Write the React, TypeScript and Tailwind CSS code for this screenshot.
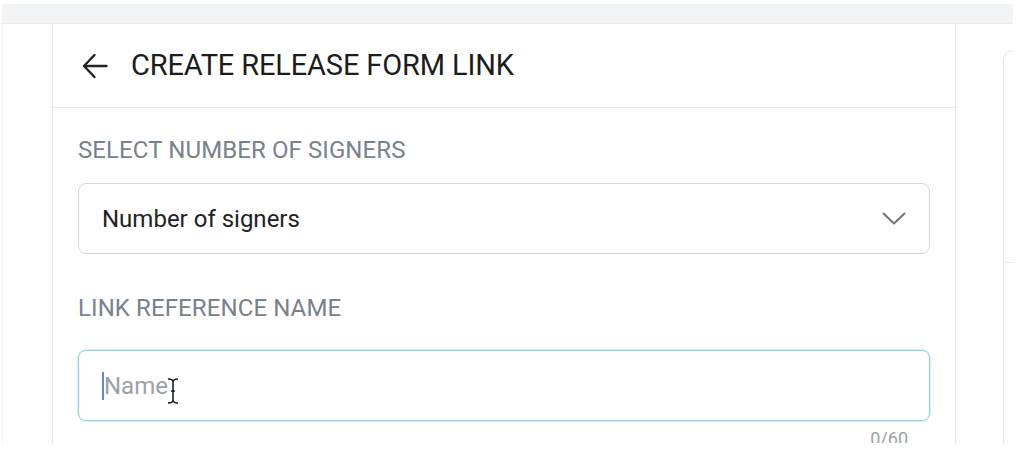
export default function App() {
    return (
        <div
            className="w-[1024px] h-[467px] bg-white overflow-hidden"
            style={{ fontFamily: "Roboto, 'Noto Sans', sans-serif" }}
        >
            <div className="ml-[2px] w-[1011px] h-[443px] flex flex-col overflow-hidden">
                {/* top strip */}
                <div className="mt-[4px] h-[20px] shrink-0 bg-[#f3f4f6] border-b border-[#e9ebee]" />

                <div className="flex flex-1 min-h-0">
                    {/* left gutter */}
                    <div className="w-[50px] shrink-0 border-l border-[#efefef]" />

                    {/* main panel */}
                    <div className="w-[904px] shrink-0 border-x border-[#e6e7ea] flex flex-col">
                        <div className="h-[84px] shrink-0 border-b border-[#e6e7ea] flex items-center pl-[29px]">
                            <svg width="26" height="26" viewBox="0 0 26 26" fill="none" stroke="#222" strokeWidth="2.4" strokeLinecap="round" strokeLinejoin="round">
                                <path d="M12.5 2 L2 13 L12.5 24" />
                                <path d="M2.5 13 H24.5" />
                            </svg>
                            <h1 className="ml-[23px] text-[29px] leading-none font-normal text-[#1c1c1c] tracking-[-0.15px]">
                                CREATE RELEASE FORM LINK
                            </h1>
                        </div>

                        <div className="px-[25px]">
                            <p className="mt-[28px] text-[24px] leading-[28px] font-normal text-[#77828e] tracking-[0.1px]">
                                SELECT NUMBER OF SIGNERS
                            </p>
                            <div className="mt-[19px] h-[71px] rounded-[8px] border border-[#d4d6da] flex items-center justify-between pl-[23px] pr-[23px]">
                                <span className="text-[24px] text-[#222]">Number of signers</span>
                                <svg width="24" height="13" viewBox="0 0 24 13" fill="none" stroke="#6b7280" strokeWidth="2" strokeLinecap="round" strokeLinejoin="round">
                                    <path d="M1.5 1.5 L12 11.5 L22.5 1.5" />
                                </svg>
                            </div>

                            <p className="mt-[40px] text-[24px] leading-[28px] font-normal text-[#77828e] tracking-[0.1px]">
                                LINK REFERENCE NAME
                            </p>
                            <div className="relative mt-[28px] h-[71px] rounded-[8px] border border-[#8fd3e0] shadow-[0_0_0_1px_#d5eff4] flex items-center pl-[23px]">
                                <span className="w-[2px] h-[28px] bg-[#5b8fd0]" />
                                <span className="text-[24px] text-[#9aa1a9]">Name</span>
                                <svg
                                    className="absolute left-[88px] top-[27px]"
                                    width="12"
                                    height="26"
                                    viewBox="0 0 12 26"
                                    fill="none"
                                    stroke="#222"
                                    strokeWidth="1.6"
                                >
                                    <path d="M1 1 Q6 1 6 4 Q6 1 11 1" />
                                    <path d="M6 4 V22" />
                                    <path d="M1 25 Q6 25 6 22 Q6 25 11 25" />
                                    <path d="M4 13 H8" />
                                </svg>
                            </div>
                            <div className="flex justify-end pr-[22px] mt-[9px]">
                                <span className="text-[18px] leading-none text-[#9aa1a9]">0/60</span>
                            </div>
                        </div>
                    </div>

                    {/* gap */}
                    <div className="w-[47px] shrink-0" />

                    {/* right panel */}
                    <div className="flex-1 mt-[26px] border-l border-t border-[#e6e7ea] rounded-tl-[10px] flex flex-col">
                        <div className="h-[212px] border-b border-[#e6e7ea]" />
                    </div>
                </div>
            </div>
        </div>
    );
}
